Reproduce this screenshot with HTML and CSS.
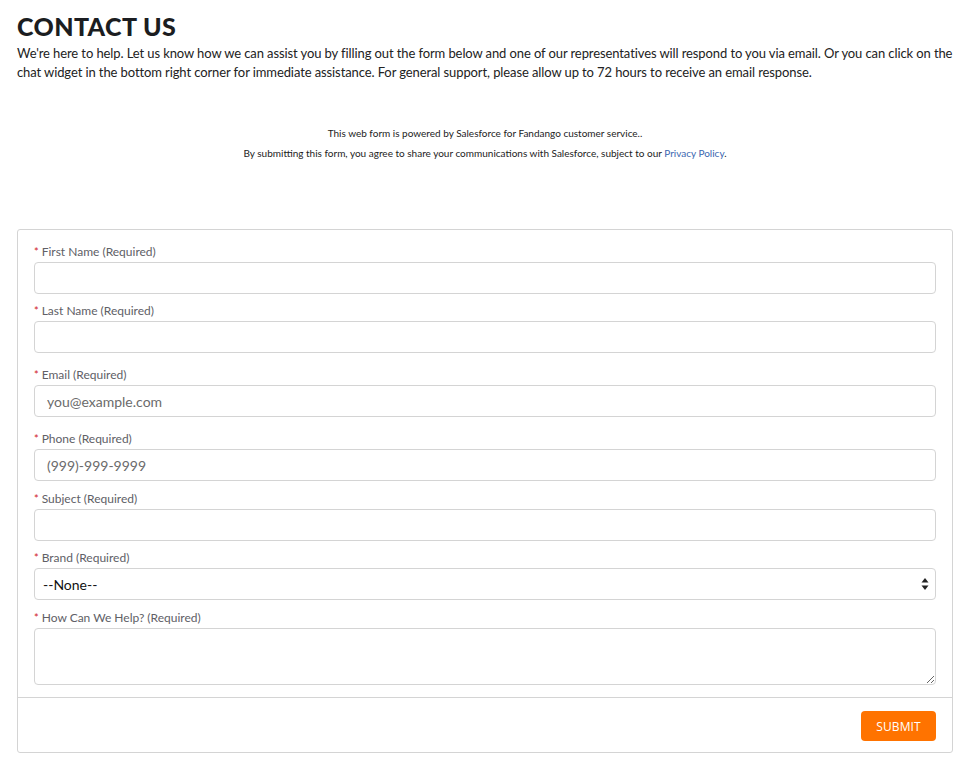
FILE: index.html
```html
<!DOCTYPE html>
<html lang="en">
<head>
<meta charset="utf-8">
<title>Contact Us</title>
<link rel="stylesheet" href="styles.css">
</head>
<body>
<main class="page">
  <h1 class="title">CONTACT US</h1>
  <p class="intro">We're here to help. Let us know how we can assist you by filling out the form below and one of our representatives will respond to you via email. Or you can click on the chat widget in the bottom right corner for immediate assistance. For general support, please allow up to 72 hours to receive an email response.</p>

  <div class="notice">
    <p>This web form is powered by Salesforce for Fandango customer service..</p>
    <p>By submitting this form, you agree to share your communications with Salesforce, subject to our <a href="#" class="link">Privacy Policy</a>.</p>
  </div>

  <form class="card">
    <div class="card-body">
      <div class="field">
        <label class="label"><span class="req">*</span>First Name (Required)</label>
        <input class="input" type="text">
      </div>
      <div class="field">
        <label class="label"><span class="req">*</span>Last Name (Required)</label>
        <input class="input" type="text">
      </div>
      <div class="field field-wide">
        <label class="label"><span class="req">*</span>Email (Required)</label>
        <input class="input" type="email" placeholder="you@example.com">
      </div>
      <div class="field field-wide">
        <label class="label"><span class="req">*</span>Phone (Required)</label>
        <input class="input" type="tel" placeholder="(999)-999-9999">
      </div>
      <div class="field field-plus">
        <label class="label"><span class="req">*</span>Subject (Required)</label>
        <input class="input" type="text">
      </div>
      <div class="field">
        <label class="label"><span class="req">*</span>Brand (Required)</label>
        <div class="select-wrap">
          <select class="select">
            <option>--None--</option>
          </select>
          <svg class="select-arrows" width="8" height="14" viewBox="0 0 8 14" aria-hidden="true">
            <path d="M4 1 L7.5 5.5 L0.5 5.5 Z" fill="#222"/>
            <path d="M4 13 L7.5 8.5 L0.5 8.5 Z" fill="#222"/>
          </svg>
        </div>
      </div>
      <div class="field field-plus">
        <label class="label"><span class="req">*</span>How Can We Help? (Required)</label>
        <textarea class="textarea"></textarea>
      </div>
    </div>
    <div class="card-footer">
      <button type="button" class="submit">SUBMIT</button>
    </div>
  </form>
</main>
</body>
</html>
```
FILE: styles.css
```css
* { box-sizing: border-box; }

html, body {
  margin: 0;
  padding: 0;
  background: #ffffff;
}

body {
  font-family: Lato, "Open Sans", Arial, sans-serif;
  color: #16171a;
}

.page {
  padding: 11px 12px 0 17px;
}

.title {
  margin: 0;
  font-family: Lato, Arial, sans-serif;
  font-weight: 900;
  font-size: 25px;
  line-height: 30px;
  letter-spacing: 0.4px;
  color: #1b1d21;
}

.intro {
  margin: 3px 0 0;
  font-size: 13px;
  line-height: 19px;
  letter-spacing: -0.1px;
  color: #222;
}

.notice {
  margin-top: 41px;
  text-align: center;
  font-size: 10px;
  line-height: 20px;
  color: #222;
}

.notice p { margin: 0; }

.link {
  color: #3a66b0;
  text-decoration: none;
}

.card {
  margin-top: 66px;
  border: 1px solid #d4d4d4;
  border-radius: 3px;
  display: flex;
  flex-direction: column;
}

.card-body {
  padding: 13px 16px 12px;
  display: flex;
  flex-direction: column;
  gap: 8px;
}

.field {
  display: flex;
  flex-direction: column;
}

.field-wide { margin-top: 5px; }
.field-plus { margin-top: 1px; }

.label {
  font-size: 12px;
  line-height: 18px;
  color: #606066;
  margin-bottom: 1px;
}

.req {
  color: #d1202a;
  margin-right: 3px;
  font-size: 11px;
}

.input,
.select,
.textarea {
  width: 100%;
  border: 1px solid #d4d4d4;
  border-radius: 4px;
  background: #fff;
  font-family: Lato, Arial, sans-serif;
  font-size: 14px;
  color: #111;
  outline: none;
}

.input {
  height: 32px;
  padding: 0 12px;
}

.input::placeholder {
  color: #6b6b6b;
}

.select-wrap {
  position: relative;
}

.select {
  height: 32px;
  padding: 0 24px 0 8px;
  appearance: none;
  -webkit-appearance: none;
  color: #111;
}

.select-arrows {
  position: absolute;
  right: 7px;
  top: 9px;
  pointer-events: none;
}

.textarea {
  height: 57px;
  padding: 6px 12px;
  resize: vertical;
  display: block;
}

.card-footer {
  border-top: 1px solid #d4d4d4;
  padding: 13px 16px 11px;
  display: flex;
  justify-content: flex-end;
}

.submit {
  width: 75px;
  height: 30px;
  border: none;
  border-radius: 4px;
  background: #ff7300;
  color: #fff;
  font-family: "Open Sans", "Noto Sans", Arial, sans-serif;
  font-size: 12px;
  letter-spacing: 0.1px;
  cursor: pointer;
}
```
